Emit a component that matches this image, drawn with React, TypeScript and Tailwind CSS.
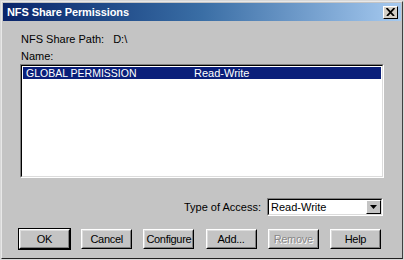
import React from 'react';

const font = "font-['Liberation_Sans',Arial,sans-serif]";

function Btn({ label, isDefault, disabled }: { label: string; isDefault?: boolean; disabled?: boolean }) {
    return (
        <div className={isDefault ? 'border border-black' : 'border border-transparent'}>
            <div className="w-[51px] h-[20px] border border-t-white border-l-white border-r-black border-b-black bg-[#c4c4c4]">
                <div className="h-full flex items-center justify-center border border-t-[#dcdcdc] border-l-[#dcdcdc] border-r-[#808080] border-b-[#808080] tracking-[-0.3px]">
                    {disabled ? (
                        <span className="text-[#888] [text-shadow:1px_1px_0_#fff]">{label}</span>
                    ) : (
                        <span className="text-black">{label}</span>
                    )}
                </div>
            </div>
        </div>
    );
}

export default function App() {
    return (
        <div className={`w-[404px] h-[260px] bg-[#d8d8d8] p-px ${font} text-[11px] leading-none`}>
            <div className="w-full h-full border border-t-[#e8e8e8] border-l-[#e8e8e8] border-r-[#404040] border-b-[#202020] bg-[#c4c4c4] flex flex-col">
                {/* Title bar */}
                <div className="h-[18px] mx-px mt-px flex items-center justify-between bg-gradient-to-r from-[#0a246a] via-[#3a6ea5] to-[#a6caf0] pl-1 pr-[3px]">
                    <span className="text-white font-bold text-[11px] tracking-[-0.1px]">NFS Share Permissions</span>
                    <div className="w-[15px] h-[13px] bg-[#d4d0c8] border border-t-white border-l-white border-r-black border-b-black flex items-center justify-center">
                        <svg width="9" height="8" viewBox="0 0 9 8">
                            <path d="M0.5 0 L8 8 M8.5 0 L1 8" stroke="black" strokeWidth="1.8" fill="none" />
                        </svg>
                    </div>
                </div>

                {/* Body */}
                <div className="flex-1 flex flex-col px-[17px] pt-[13px]">
                    <div className="flex pl-[2px]">
                        <span>NFS Share Path:</span>
                        <span className="ml-[9px]">D:\</span>
                    </div>
                    <div className="mt-[6px] pl-[2px]">Name:</div>

                    <div className="mt-[2px] ml-[1px] w-[364px] h-[114px] border border-t-[#808080] border-l-[#808080] border-r-white border-b-white">
                        <div className="w-full h-full border border-t-black border-l-black border-r-[#dcdcdc] border-b-[#dcdcdc] bg-white p-px">
                            <div className="h-[12px] bg-[#0a1f7a] text-white flex items-center">
                                <span className="ml-[3px] w-[168px] text-[10.5px]">GLOBAL PERMISSION</span>
                                <span>Read-Write</span>
                            </div>
                        </div>
                    </div>

                    <div className="mt-[20px] flex items-center justify-end pr-[2px]">
                        <span>Type of Access:</span>
                        <div className="ml-[6px] w-[116px] h-[18px] border border-t-[#808080] border-l-[#808080] border-r-white border-b-white">
                            <div className="w-full h-full border border-t-black border-l-black border-r-[#dcdcdc] border-b-[#dcdcdc] bg-white flex items-center justify-between">
                                <span className="ml-[2px]">Read-Write</span>
                                <div className="w-[15px] h-full bg-[#c4c4c4] border border-t-white border-l-white border-r-black border-b-black flex items-center justify-center">
                                    <svg width="7" height="4" viewBox="0 0 7 4">
                                        <path d="M0 0 H7 L3.5 4 Z" fill="black" />
                                    </svg>
                                </div>
                            </div>
                        </div>
                    </div>

                    <div className="mt-[12px] flex justify-between pr-[3px] -ml-[1px]">
                        <Btn label="OK" isDefault />
                        <Btn label="Cancel" />
                        <Btn label="Configure" />
                        <Btn label="Add..." />
                        <Btn label="Remove" disabled />
                        <Btn label="Help" />
                    </div>
                </div>
            </div>
        </div>
    );
}
